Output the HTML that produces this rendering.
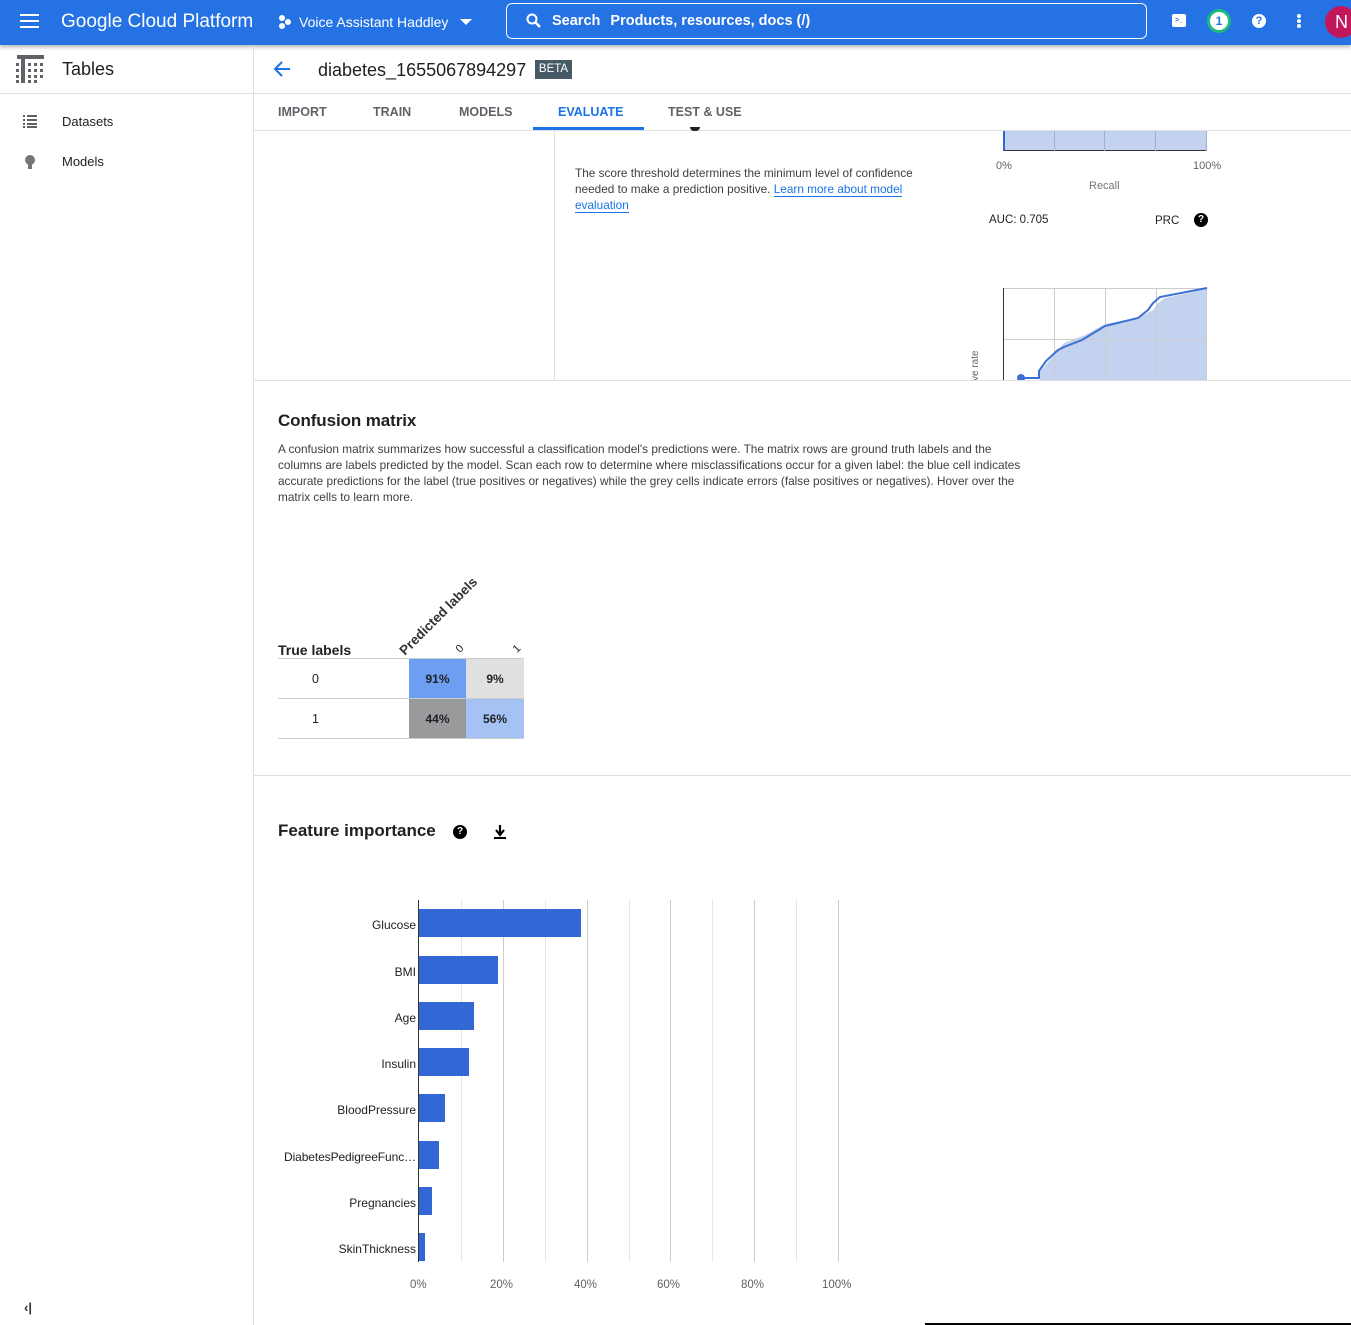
<!DOCTYPE html>
<html><head><meta charset="utf-8"><style>
*{margin:0;padding:0;box-sizing:border-box}
body{width:1351px;height:1325px;position:relative;overflow:hidden;background:#fff;font-family:"Liberation Sans",sans-serif;color:#202124}
.a{position:absolute;white-space:nowrap}
.top{position:absolute;left:0;top:0;width:1351px;height:45px;background:#2472e3;box-shadow:0 2px 4px rgba(0,0,0,.3)}
.tab{position:absolute;top:105px;font-size:12.5px;font-weight:bold;color:#5f6368}
.lbl{font-size:12px;color:#202124;text-align:right;width:140px}
.ax{font-size:11.5px;color:#5f6368}
.g{position:absolute;top:900px;height:362px;width:1px;background:#e6e6e6}
.bar{position:absolute;left:419px;height:28px;background:#3367d6}
</style></head><body>
<div class="top">
 <div class="a" style="left:20px;top:14px;width:19px;height:2px;background:#fff;box-shadow:0 6px 0 #fff,0 12px 0 #fff"></div>
 <div class="a" style="left:61px;top:11px;font-size:19px;color:#fff">Google Cloud Platform</div>
 <svg class="a" style="left:278px;top:14px" width="14" height="16"><circle cx="4" cy="4" r="3" fill="#fff"/><circle cx="10" cy="8" r="3" fill="#fff"/><circle cx="4" cy="12" r="3" fill="#fff"/></svg>
 <div class="a" style="left:299px;top:14px;font-size:14px;color:#fff">Voice Assistant Haddley</div>
 <div class="a" style="left:460px;top:19px;border:6px solid transparent;border-top:6px solid #fff;border-bottom:0"></div>
 <div class="a" style="left:506px;top:3px;width:641px;height:36px;border:1px solid #fff;border-radius:6px"></div>
 <svg class="a" style="left:526px;top:13px" width="15" height="15"><circle cx="6" cy="6" r="4.5" stroke="#fff" stroke-width="2" fill="none"/><path d="M9 9l5 5" stroke="#fff" stroke-width="2.5"/></svg>
 <div class="a" style="left:552px;top:13px;font-size:14.5px;color:#fff;font-weight:bold">Search <span style="margin-left:6px">Products, resources, docs (/)</span></div>
 <div class="a" style="left:1172px;top:14px;width:14px;height:13px;background:#fff;border-radius:2px"><div style="position:absolute;left:3px;top:3px;font-size:7px;color:#2472e3;font-weight:bold">&gt;_</div></div>
 <div class="a" style="left:1207px;top:9px;width:24px;height:24px;border-radius:50%;background:#fff;border:3px solid #1eb980;text-align:center;font-size:12px;font-weight:bold;color:#2472e3;line-height:18px">1</div>
 <div class="a" style="left:1252px;top:14px;width:14px;height:14px;border-radius:50%;background:#fff;text-align:center;font-size:11px;font-weight:bold;color:#2472e3;line-height:14px">?</div>
 <div class="a" style="left:1297px;top:14px;width:4px;height:4px;border-radius:50%;background:#fff;box-shadow:0 5px 0 #fff,0 10px 0 #fff"></div>
 <div class="a" style="left:1325px;top:6px;width:32px;height:32px;border-radius:50%;background:#c2185b;color:#fff;font-size:18px;line-height:32px;padding-left:10px">N</div>
</div>
<div class="a" style="left:253px;top:45px;width:1px;height:1280px;background:#e0e0e0"></div>
<div class="a" style="left:0;top:93px;width:1351px;height:1px;background:#e0e0e0"></div>
<svg class="a" style="left:15px;top:54px" width="30" height="30"><rect x="2" y="1" width="27" height="4" fill="#5f6368"/><rect x="6" y="1" width="4" height="28" fill="#5f6368"/><g fill="#5f6368"><rect x="1" y="9" width="3" height="3"/><rect x="1" y="15" width="3" height="3"/><rect x="1" y="21" width="3" height="3"/><rect x="1" y="26" width="3" height="3"/><rect x="13" y="9" width="3" height="3"/><rect x="19" y="9" width="3" height="3"/><rect x="25" y="9" width="3" height="3"/><rect x="13" y="15" width="3" height="3"/><rect x="19" y="15" width="3" height="3"/><rect x="25" y="15" width="3" height="3"/><rect x="13" y="21" width="3" height="3"/><rect x="19" y="21" width="3" height="3"/><rect x="25" y="21" width="3" height="3"/><rect x="13" y="26" width="3" height="3"/><rect x="19" y="26" width="3" height="3"/></g></svg>
<div class="a" style="left:62px;top:59px;font-size:18px">Tables</div>
<svg class="a" style="left:22px;top:114px" width="16" height="14" fill="#5f6368"><rect x="1" y="1" width="2" height="2"/><rect x="5" y="1" width="10" height="2"/><rect x="1" y="5" width="2" height="2"/><rect x="5" y="5" width="10" height="2"/><rect x="1" y="9" width="2" height="2"/><rect x="5" y="9" width="10" height="2"/><rect x="1" y="12" width="2" height="2"/><rect x="5" y="12" width="10" height="2"/></svg>
<div class="a" style="left:62px;top:114px;font-size:13px">Datasets</div>
<svg class="a" style="left:24px;top:154px" width="12" height="16"><circle cx="6" cy="6" r="5" fill="#757575"/><rect x="4" y="10" width="4" height="5" fill="#757575"/></svg>
<div class="a" style="left:62px;top:154px;font-size:13px">Models</div>
<div class="a" style="left:24px;top:1300px;font-size:13px;font-weight:bold;color:#333">‹|</div>
<svg class="a" style="left:272px;top:60px" width="20" height="18"><path d="M18 9H4M10 2L3 9l7 7" stroke="#1a73e8" stroke-width="2" fill="none"/></svg>
<div class="a" style="left:318px;top:60px;font-size:18px">diabetes_1655067894297</div>
<div class="a" style="left:535px;top:60px;width:37px;height:19px;background:#455a64;color:#fff;font-size:11.5px;text-align:center;line-height:19px">BETA</div>
<div class="tab" style="left:278px">IMPORT</div>
<div class="tab" style="left:373px">TRAIN</div>
<div class="tab" style="left:459px">MODELS</div>
<div class="tab" style="left:558px;color:#1a73e8">EVALUATE</div>
<div class="tab" style="left:668px">TEST &amp; USE</div>
<div class="a" style="left:533px;top:127px;width:111px;height:3px;background:#1a73e8"></div>
<div class="a" style="left:254px;top:130px;width:1097px;height:1px;background:#e0e0e0"></div>
<div class="a" style="left:554px;top:131px;width:1px;height:250px;background:#e0e0e0"></div>
<div class="a" style="left:690px;top:127px;width:10px;height:4px;background:#222;border-radius:0 0 5px 5px"></div>
<div class="a" style="left:575px;top:165px;font-size:11.8px;line-height:16px;color:#3c4043">The score threshold determines the minimum level of confidence<br>needed to make a prediction positive. <span style="color:#1a73e8;border-bottom:1px solid #1a73e8">Learn more about model</span><br><span style="color:#1a73e8;border-bottom:1px solid #1a73e8">evaluation</span></div>
<div class="a" style="left:1003px;top:131px;width:204px;height:20px;background:#c3d3ef;border-left:2px solid #3367d6;border-bottom:1px solid #333"></div>
<div class="a" style="left:1054px;top:131px;width:1px;height:20px;background:#9fb0cc;box-shadow:50px 0 0 #9fb0cc,101px 0 0 #9fb0cc,152px 0 0 #9fb0cc"></div>
<div class="a ax" style="left:996px;top:160px;font-size:11px">0%</div>
<div class="a ax" style="left:1193px;top:160px;font-size:11px">100%</div>
<div class="a ax" style="left:1089px;top:180px;font-size:11px;color:#757575">Recall</div>
<div class="a" style="left:989px;top:214px;font-size:11.5px">AUC: 0.705</div>
<div class="a" style="left:1155px;top:215px;font-size:11.5px">PRC</div>
<div class="a" style="left:1194px;top:213px;width:14px;height:14px;border-radius:50%;background:#000;color:#fff;font-size:10px;font-weight:bold;text-align:center;line-height:14px">?</div>
<svg class="a" style="left:960px;top:285px" width="250" height="96">
<path d="M80 96V90L78 89L98 65L104 58L125 50L145 39L178 33L193 25L198 18L205 13L247 4V96Z" fill="#c3d3ef"/>
<g stroke="#ccc" stroke-width="1"><path d="M44 3.5H247M44 54.5H247M94.5 3V96M145.5 3V96M196.5 3V96M246.5 3V96"/></g>
<path d="M43.5 3V96" stroke="#333"/>
<path d="M62 93H79V86L86 76L98 65L104 62L122 55L145 41L178 33L188 25L193 18L200 12L247 3" stroke="#3b6fd4" stroke-width="2" fill="none"/>
<circle cx="61" cy="93" r="4" fill="#3b6fd4"/>
<text x="0" y="0" transform="translate(18 96) rotate(-90)" font-size="10" fill="#666" font-family="Liberation Sans">ve rate</text>
</svg>
<div class="a" style="left:254px;top:380px;width:1097px;height:1px;background:#e0e0e0"></div>
<div class="a" style="left:278px;top:411px;font-size:17px;font-weight:bold;letter-spacing:-.1px">Confusion matrix</div>
<div class="a" style="left:278px;top:441px;font-size:11.8px;line-height:16px;color:#3c4043">A confusion matrix summarizes how successful a classification model's predictions were. The matrix rows are ground truth labels and the<br>columns are labels predicted by the model. Scan each row to determine where misclassifications occur for a given label: the blue cell indicates<br>accurate predictions for the label (true positives or negatives) while the grey cells indicate errors (false positives or negatives). Hover over the<br>matrix cells to learn more.</div>
<div class="a" style="left:278px;top:642px;font-size:14px;font-weight:bold">True labels</div>
<div class="a" style="left:407px;top:643px;font-size:13.5px;font-weight:bold;color:#333;transform:rotate(-45deg);transform-origin:0 100%">Predicted labels</div>
<div class="a" style="left:457px;top:643px;font-size:11px;transform:rotate(-45deg)">0</div>
<div class="a" style="left:514px;top:643px;font-size:11px;transform:rotate(-45deg)">1</div>
<div class="a" style="left:278px;top:658px;width:246px;height:1px;background:#ccc"></div>
<div class="a" style="left:278px;top:698px;width:246px;height:1px;background:#ccc"></div>
<div class="a" style="left:278px;top:738px;width:246px;height:1px;background:#ccc"></div>
<div class="a" style="left:312px;top:672px;font-size:12.5px">0</div>
<div class="a" style="left:312px;top:712px;font-size:12.5px">1</div>
<div class="a" style="left:409px;top:659px;width:57px;height:39px;background:#6d9ef1;font-size:12px;font-weight:bold;text-align:center;line-height:40px">91%</div>
<div class="a" style="left:466px;top:659px;width:58px;height:39px;background:#e0e0e0;font-size:12px;font-weight:bold;text-align:center;line-height:40px">9%</div>
<div class="a" style="left:409px;top:699px;width:57px;height:39px;background:#999a9c;font-size:12px;font-weight:bold;text-align:center;line-height:40px">44%</div>
<div class="a" style="left:466px;top:699px;width:58px;height:39px;background:#a4c2f4;font-size:12px;font-weight:bold;text-align:center;line-height:40px">56%</div>
<div class="a" style="left:254px;top:775px;width:1097px;height:1px;background:#e0e0e0"></div>
<div class="a" style="left:278px;top:821px;font-size:17px;font-weight:bold;letter-spacing:0">Feature importance</div>
<div class="a" style="left:453px;top:825px;width:14px;height:14px;border-radius:50%;background:#000;color:#fff;font-size:10px;font-weight:bold;text-align:center;line-height:14px">?</div>
<svg class="a" style="left:493px;top:824px" width="14" height="16"><path d="M7 1v9M3 6l4 5 4-5" stroke="#000" stroke-width="2.2" fill="none"/><rect x="1" y="13" width="12" height="2" fill="#000"/></svg>
<div class="g" style="left:461px"></div><div class="g" style="left:503px;background:#ccc"></div><div class="g" style="left:545px"></div><div class="g" style="left:587px;background:#ccc"></div><div class="g" style="left:629px"></div><div class="g" style="left:670px;background:#ccc"></div><div class="g" style="left:712px"></div><div class="g" style="left:754px;background:#ccc"></div><div class="g" style="left:796px"></div><div class="g" style="left:838px;background:#ccc"></div>
<div class="bar" style="top:909px;width:162px"></div>
<div class="bar" style="top:956px;width:79px"></div>
<div class="bar" style="top:1002px;width:55px"></div>
<div class="bar" style="top:1048px;width:50px"></div>
<div class="bar" style="top:1094px;width:26px"></div>
<div class="bar" style="top:1141px;width:20px"></div>
<div class="bar" style="top:1187px;width:13px"></div>
<div class="bar" style="top:1233px;width:6px"></div>
<div class="a" style="left:418px;top:900px;width:1px;height:362px;background:#333"></div>
<div class="a lbl" style="left:276px;top:918px">Glucose</div>
<div class="a lbl" style="left:276px;top:965px">BMI</div>
<div class="a lbl" style="left:276px;top:1011px">Age</div>
<div class="a lbl" style="left:276px;top:1057px">Insulin</div>
<div class="a lbl" style="left:276px;top:1103px">BloodPressure</div>
<div class="a lbl" style="left:276px;top:1150px;letter-spacing:-.1px">DiabetesPedigreeFunc…</div>
<div class="a lbl" style="left:276px;top:1196px">Pregnancies</div>
<div class="a lbl" style="left:276px;top:1242px">SkinThickness</div>
<div class="a ax" style="left:410px;top:1279px">0%</div>
<div class="a ax" style="left:490px;top:1279px">20%</div>
<div class="a ax" style="left:574px;top:1279px">40%</div>
<div class="a ax" style="left:657px;top:1279px">60%</div>
<div class="a ax" style="left:741px;top:1279px">80%</div>
<div class="a ax" style="left:822px;top:1279px">100%</div>
<div class="a" style="left:925px;top:1323px;width:426px;height:2px;background:#000"></div>
</body></html>
